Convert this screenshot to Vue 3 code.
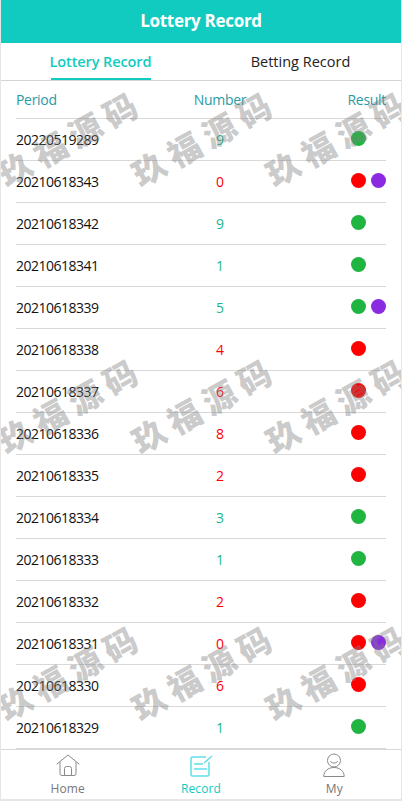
<script setup>
import { ref } from 'vue'

const activeTab = ref(0)
const tabs = ['Lottery Record', 'Betting Record']

const records = [
  { period: '20220519289', number: 9, dots: ['green'] },
  { period: '20210618343', number: 0, dots: ['red', 'purple'] },
  { period: '20210618342', number: 9, dots: ['green'] },
  { period: '20210618341', number: 1, dots: ['green'] },
  { period: '20210618339', number: 5, dots: ['green', 'purple'] },
  { period: '20210618338', number: 4, dots: ['red'] },
  { period: '20210618337', number: 6, dots: ['red'] },
  { period: '20210618336', number: 8, dots: ['red'] },
  { period: '20210618335', number: 2, dots: ['red'] },
  { period: '20210618334', number: 3, dots: ['green'] },
  { period: '20210618333', number: 1, dots: ['green'] },
  { period: '20210618332', number: 2, dots: ['red'] },
  { period: '20210618331', number: 0, dots: ['red', 'purple'] },
  { period: '20210618330', number: 6, dots: ['red'] },
  { period: '20210618329', number: 1, dots: ['green'] },
]

// 3 columns x 3 rows, same tile repeated over the page
const marks = Array.from({ length: 9 }, (_, i) => i)
</script>

<template>
  <div class="page">
    <header class="title">Lottery Record</header>

    <div class="tabs">
      <div
        v-for="(tab, i) in tabs"
        :key="tab"
        class="tab"
        :class="{ active: activeTab === i }"
        @click="activeTab = i"
      >
        <span class="tab-label">{{ tab }}</span>
      </div>
    </div>

    <main class="list">
      <div class="row head">
        <span>Period</span>
        <span class="num">Number</span>
        <span class="res">Result</span>
      </div>
      <div v-for="r in records" :key="r.period" class="row">
        <span class="period">{{ r.period }}</span>
        <span class="num" :class="r.dots[0]">{{ r.number }}</span>
        <span class="res">
          <span class="dots">
            <i v-for="d in r.dots" :key="d" class="dot" :class="'bg-' + d"></i>
          </span>
        </span>
      </div>
    </main>

    <nav class="nav">
      <div class="nav-item">
        <svg width="24" height="24" viewBox="0 0 24 24" fill="none" stroke="#8a8a8a" stroke-width="1">
          <path d="M1 11 12 2l11 9" stroke-linecap="round" stroke-linejoin="round" />
          <path d="M4 9v11.500a2 2 0 0 0 2 2h12a2 2 0 0 0 2-2V9" />
          <path d="M8.500 22.500v-7a2 2 0 0 1 2-2h3a2 2 0 0 1 2 2v7" />
        </svg>
        <span>Home</span>
      </div>
      <div class="nav-item on">
        <svg width="24" height="24" viewBox="0 0 24 24" fill="none" stroke="#5fdfe6" stroke-width="1.500">
          <path d="M17 4H3.500A1.500 1.500 0 0 0 2 5.500v16A1.500 1.500 0 0 0 3.500 23h15A1.500 1.500 0 0 0 20 21.500V9" />
          <path d="M5 11h9M5 16h13" />
          <path d="M15 10 23 3" />
        </svg>
        <span>Record</span>
      </div>
      <div class="nav-item">
        <svg width="24" height="24" viewBox="0 0 24 24" fill="none" stroke="#8a8a8a" stroke-width="1">
          <circle cx="12" cy="7.500" r="6.500" />
          <path d="M8.500 8.500c1 2.200 6 2.200 7 0" stroke-linecap="round" />
          <path d="M1.800 23.500c0-5.500 4.500-9 10.200-9s10.200 3.500 10.200 9z" stroke-linejoin="round" />
        </svg>
        <span>My</span>
      </div>
    </nav>

    <div class="marks" aria-hidden="true">
      <div v-for="m in marks" :key="m" class="mark"><span>玖福源码</span></div>
    </div>
  </div>
</template>

<style>
html,
body {
  margin: 0;
  background: #e6e6e6;
}
</style>

<style scoped>
.page {
  position: relative;
  display: flex;
  flex-direction: column;
  width: 400px;
  height: 799px;
  margin-left: 1px;
  background: #fff;
  overflow: hidden;
  font-family: "Open Sans", "Noto Sans CJK SC", sans-serif;
  font-size: 14px;
  color: #111;
}

.title {
  flex: none;
  height: 43px;
  line-height: 42px;
  text-align: center;
  background: #12cbc0;
  color: #fff;
  font-size: 17px;
  font-weight: 700;
  letter-spacing: -0.300px;
}

.tabs {
  flex: none;
  display: flex;
  height: 37px;
  border-bottom: 1px solid #d4d4d4;
}

.tab {
  flex: 1;
  display: flex;
  justify-content: center;
  padding-right: 1px;
}

.tab-label {
  display: flex;
  justify-content: center;
  width: 100px;
  height: 35px;
  line-height: 37px;
  white-space: nowrap;
  color: #222;
  font-size: 14.500px;
}

.tab.active .tab-label {
  color: #12cbc0;
  font-weight: 600;
  letter-spacing: -0.100px;
  border-bottom: 2px solid #12cbc0;
}

.list {
  flex: 1;
  min-height: 0;
  margin: 0 15px;
  overflow: hidden;
}

.row {
  display: grid;
  grid-template-columns: 146px 116px 1fr;
  align-items: center;
  height: 41px;
  border-bottom: 1px solid #d8d8d8;
}

.row.head {
  height: 36px;
  padding-bottom: 1px;
  color: #2a9aa6;
  letter-spacing: -0.300px;
}

.period {
  letter-spacing: -0.500px;
}

.num {
  text-align: center;
}

.num.red {
  color: #f00;
}

.num.green {
  color: #1bb888;
}

.res {
  display: flex;
  justify-content: flex-end;
}

.dots {
  display: flex;
  gap: 5px;
  width: 35px;
  margin-top: -3px;
}

.dot {
  width: 15px;
  height: 15px;
  border-radius: 50%;
}

.bg-red {
  background: #f00;
}

.bg-green {
  background: #1fb540;
}

.bg-purple {
  background: #8a2be2;
}

.nav {
  flex: none;
  display: grid;
  grid-template-columns: repeat(3, 1fr);
  height: 49px;
  border-top: 1px solid #d8d8d8;
}

.nav-item {
  display: flex;
  flex-direction: column;
  align-items: center;
  padding-top: 3px;
  font-size: 12px;
  line-height: 14px;
  letter-spacing: 0.100px;
  color: #777;
}

.nav-item svg {
  display: block;
  margin-bottom: 5px;
}

.nav-item.on {
  color: #12cbc0;
}

/* watermark over the whole page */
.marks {
  position: absolute;
  top: 3px;
  left: -1px;
  display: grid;
  grid-template-columns: repeat(3, 134px);
  grid-auto-rows: 267px;
  pointer-events: none;
}

.mark {
  display: flex;
  align-items: center;
  justify-content: center;
}

.mark span {
  display: block;
  white-space: nowrap;
  transform: translate(3px, 0) rotate(-29deg);
  font-family: "Noto Sans CJK SC", sans-serif;
  font-size: 33px;
  font-weight: 900;
  letter-spacing: 7px;
  color: rgba(128, 128, 128, 0.42);
}
</style>
